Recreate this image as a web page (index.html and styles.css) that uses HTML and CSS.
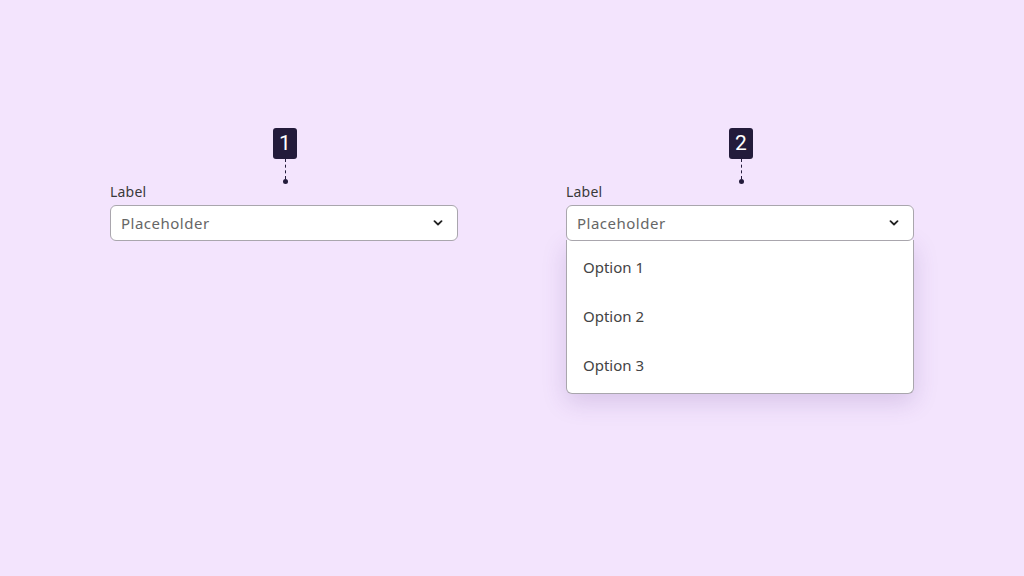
FILE: index.html
```html
<!DOCTYPE html>
<html lang="en">
<head>
<meta charset="utf-8">
<title>Select states</title>
<link rel="stylesheet" href="styles.css">
</head>
<body>
<main class="stage">
  <section class="field">
    <div class="marker">
      <span class="badge">1</span>
      <span class="stem"></span>
      <span class="dot"></span>
    </div>
    <div class="label">Label</div>
    <div class="select">
      <span class="placeholder">Placeholder</span>
      <svg class="chev" width="10" height="6" viewBox="0 0 10 6"><path d="M1.5 1.2 L5 4.5 L8.5 1.2" fill="none" stroke="#222" stroke-width="1.8" stroke-linecap="round" stroke-linejoin="round"/></svg>
    </div>
  </section>
  <section class="field">
    <div class="marker">
      <span class="badge">2</span>
      <span class="stem"></span>
      <span class="dot"></span>
    </div>
    <div class="label">Label</div>
    <div class="select open">
      <span class="placeholder">Placeholder</span>
      <svg class="chev" width="10" height="6" viewBox="0 0 10 6"><path d="M1.5 1.2 L5 4.5 L8.5 1.2" fill="none" stroke="#222" stroke-width="1.8" stroke-linecap="round" stroke-linejoin="round"/></svg>
    </div>
    <ul class="menu">
      <li>Option 1</li>
      <li>Option 2</li>
      <li>Option 3</li>
    </ul>
  </section>
</main>
</body>
</html>
```
FILE: styles.css
```css
html, body {
  margin: 0;
  padding: 0;
}
body {
  width: 1024px;
  height: 576px;
  background: #f3e4fd;
  font-family: "Noto Sans", "DejaVu Sans", sans-serif;
  overflow: hidden;
}
.stage {
  display: flex;
  gap: 108px;
  padding: 128px 0 0 110px;
}
.field {
  width: 348px;
  display: flex;
  flex-direction: column;
}
.marker {
  display: flex;
  flex-direction: column;
  align-items: center;
  padding-left: 2px;
}
.badge {
  width: 24px;
  height: 31px;
  border-radius: 3px;
  background: #231b3b;
  color: #fff;
  font-family: Roboto, sans-serif;
  font-size: 21px;
  line-height: 31px;
  text-align: center;
}
.stem {
  width: 0;
  height: 20px;
  border-left: 1.4px dashed #231b3b;
}
.dot {
  width: 5px;
  height: 5px;
  border-radius: 50%;
  background: #231b3b;
}
.label {
  font-size: 14px;
  line-height: 16px;
  color: #3a3a3a;
  letter-spacing: 0.2px;
  height: 21px;
}
.select {
  box-sizing: border-box;
  height: 36px;
  border: 1px solid #a9a6ad;
  border-radius: 6px;
  background: #fff;
  display: flex;
  align-items: center;
  justify-content: space-between;
  padding: 0 14px 0 10px;
}
.placeholder {
  font-size: 15px;
  letter-spacing: 0.5px;
  color: #666;
}
.select.open {
  position: relative;
  z-index: 2;
}
.menu {
  list-style: none;
  margin: -1px 0 0;
  padding: 3px 0;
  box-sizing: border-box;
  height: 154px;
  background: #fff;
  border: 1px solid #a9a6ad;
  border-top: none;
  border-radius: 0 0 6px 6px;
  box-shadow: 0 8px 24px rgba(90, 50, 140, 0.18);
}
.menu li {
  height: 49px;
  line-height: 49px;
  padding-left: 16px;
  font-size: 15px;
  color: #444;
}
```
